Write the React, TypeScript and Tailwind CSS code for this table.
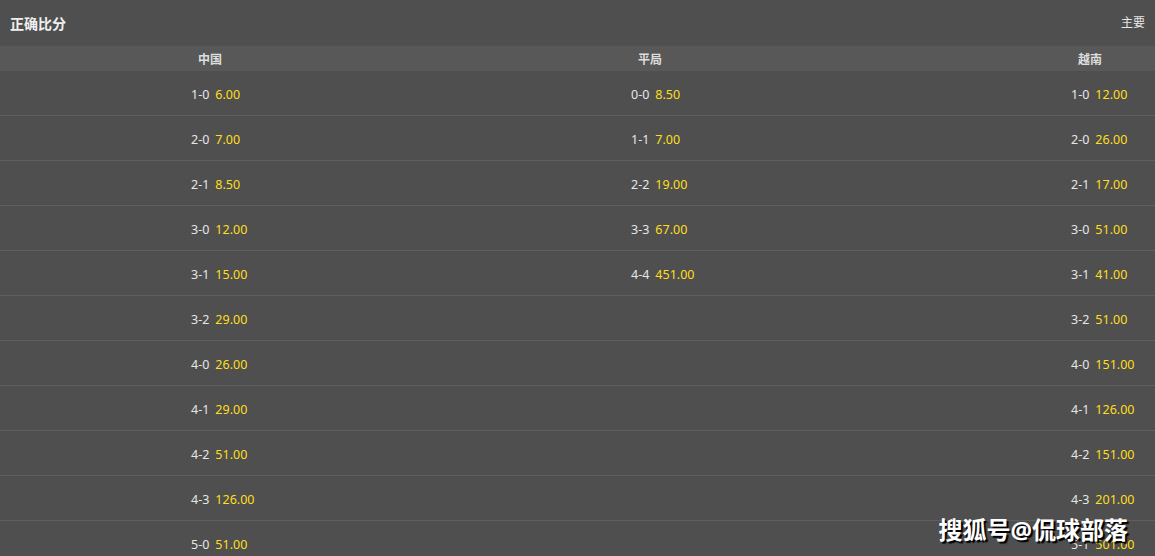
const COLUMNS = [
  {
    name: '中国',
    rows: [
      ['1-0', '6.00'], ['2-0', '7.00'], ['2-1', '8.50'], ['3-0', '12.00'], ['3-1', '15.00'], ['3-2', '29.00'],
      ['4-0', '26.00'], ['4-1', '29.00'], ['4-2', '51.00'], ['4-3', '126.00'], ['5-0', '51.00'],
    ],
  },
  {
    name: '平局',
    rows: [['0-0', '8.50'], ['1-1', '7.00'], ['2-2', '19.00'], ['3-3', '67.00'], ['4-4', '451.00']],
  },
  {
    name: '越南',
    rows: [
      ['1-0', '12.00'], ['2-0', '26.00'], ['2-1', '17.00'], ['3-0', '51.00'], ['3-1', '41.00'], ['3-2', '51.00'],
      ['4-0', '151.00'], ['4-1', '126.00'], ['4-2', '151.00'], ['4-3', '201.00'], ['5-1', '501.00'],
    ],
  },
];
const ROW_COUNT = 11;

const FONT = "font-['Noto_Sans','Noto_Sans_CJK_SC',sans-serif]";

export default function App() {
  return (
    <div className={`relative h-[556px] w-[1155px] overflow-hidden bg-[#4f4f4f] text-[#e6e6e6] ${FONT}`}>
      <header className="flex h-[46px] items-center justify-between px-[10px]">
        <h1 className="text-[14px] font-bold text-[#f0f0f0]">正确比分</h1>
        <span className="text-[12px] text-[#e6e6e6]">主要</span>
      </header>

      <div className="grid h-[25px] grid-cols-[440px_440px_440px] items-center bg-[#585858]">
        {COLUMNS.map((c) => (
          <div key={c.name} className="w-[420px] pt-[2px] text-center text-[12px] font-bold text-[#dedede]">
            {c.name}
          </div>
        ))}
      </div>

      {Array.from({ length: ROW_COUNT }).map((_, i) => (
        <div key={i} className="grid h-[45px] grid-cols-[440px_440px_440px] items-center border-b border-[#5f5f5f]">
          {COLUMNS.map((c) => {
            const r = c.rows[i];
            return (
              <div key={c.name} className="flex gap-[6px] pl-[191px] pt-[5px] text-[12.5px] leading-none">
                {r && (
                  <>
                    <span className="text-[#e6e6e6]">{r[0]}</span>
                    <span className="text-[#ffdf1b]">{r[1]}</span>
                  </>
                )}
              </div>
            );
          })}
        </div>
      ))}

      <div className="absolute right-[27px] top-[512px] text-[24px] font-bold text-white [text-shadow:2px_2px_1px_#000]">
        搜狐号@侃球部落
      </div>
    </div>
  );
}
